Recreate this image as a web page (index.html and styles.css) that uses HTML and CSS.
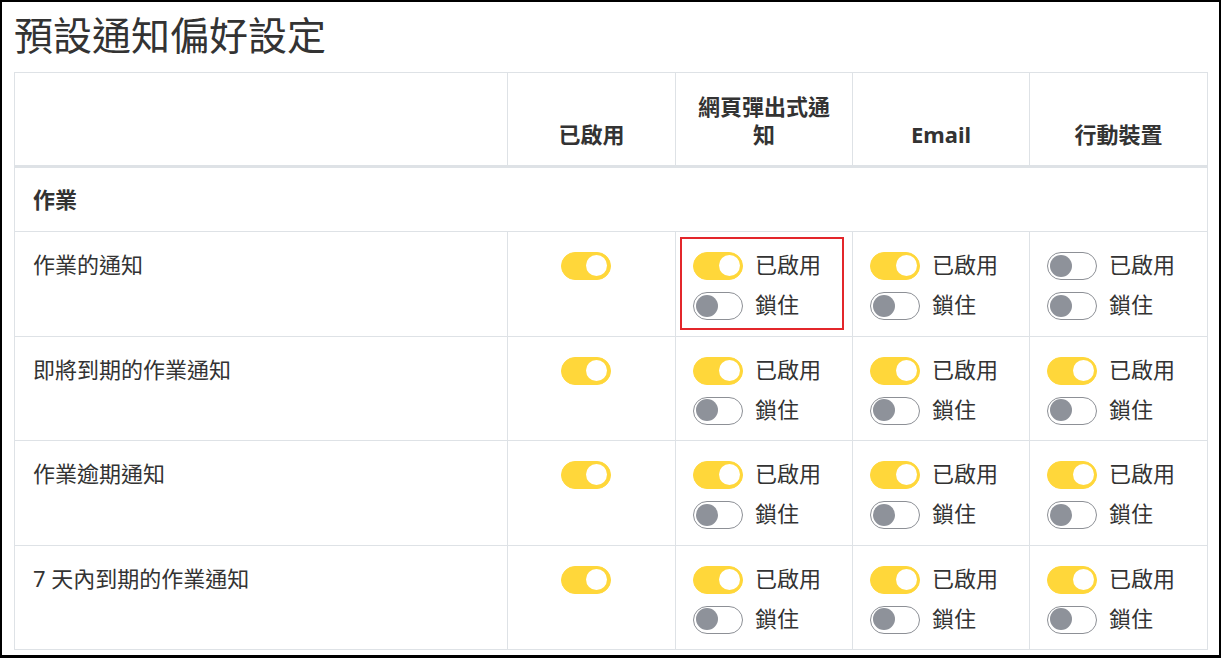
FILE: index.html
```html
<!DOCTYPE html>
<html lang="zh-Hant">
<head>
<meta charset="utf-8">
<title>預設通知偏好設定</title>
<link rel="stylesheet" href="styles.css">
</head>
<body>
<div class="frame">
  <h1 class="title">預設通知偏好設定</h1>
  <table class="prefs">
    <colgroup>
      <col class="c-name"><col class="c-enabled"><col class="c-ch"><col class="c-ch"><col class="c-ch-last">
    </colgroup>
    <thead>
      <tr>
        <th></th>
        <th>已啟用</th>
        <th>網頁彈出式通知</th>
        <th>Email</th>
        <th>行動裝置</th>
      </tr>
    </thead>
    <tbody>
      <tr class="section"><th colspan="5">作業</th></tr>

      <tr>
        <td class="name"><span class="label">作業的通知</span></td>
        <td class="enabled"><span class="switch on"></span><span class="spacer"></span></td>
        <td class="channel"><div class="group highlight">
          <div class="opt"><span class="switch on"></span><span class="label">已啟用</span></div>
          <div class="opt"><span class="switch"></span><span class="label">鎖住</span></div>
        </div></td>
        <td class="channel"><div class="group">
          <div class="opt"><span class="switch on"></span><span class="label">已啟用</span></div>
          <div class="opt"><span class="switch"></span><span class="label">鎖住</span></div>
        </div></td>
        <td class="channel"><div class="group">
          <div class="opt"><span class="switch"></span><span class="label">已啟用</span></div>
          <div class="opt"><span class="switch"></span><span class="label">鎖住</span></div>
        </div></td>
      </tr>

      <tr>
        <td class="name"><span class="label">即將到期的作業通知</span></td>
        <td class="enabled"><span class="switch on"></span><span class="spacer"></span></td>
        <td class="channel"><div class="group">
          <div class="opt"><span class="switch on"></span><span class="label">已啟用</span></div>
          <div class="opt"><span class="switch"></span><span class="label">鎖住</span></div>
        </div></td>
        <td class="channel"><div class="group">
          <div class="opt"><span class="switch on"></span><span class="label">已啟用</span></div>
          <div class="opt"><span class="switch"></span><span class="label">鎖住</span></div>
        </div></td>
        <td class="channel"><div class="group">
          <div class="opt"><span class="switch on"></span><span class="label">已啟用</span></div>
          <div class="opt"><span class="switch"></span><span class="label">鎖住</span></div>
        </div></td>
      </tr>

      <tr>
        <td class="name"><span class="label">作業逾期通知</span></td>
        <td class="enabled"><span class="switch on"></span><span class="spacer"></span></td>
        <td class="channel"><div class="group">
          <div class="opt"><span class="switch on"></span><span class="label">已啟用</span></div>
          <div class="opt"><span class="switch"></span><span class="label">鎖住</span></div>
        </div></td>
        <td class="channel"><div class="group">
          <div class="opt"><span class="switch on"></span><span class="label">已啟用</span></div>
          <div class="opt"><span class="switch"></span><span class="label">鎖住</span></div>
        </div></td>
        <td class="channel"><div class="group">
          <div class="opt"><span class="switch on"></span><span class="label">已啟用</span></div>
          <div class="opt"><span class="switch"></span><span class="label">鎖住</span></div>
        </div></td>
      </tr>

      <tr>
        <td class="name"><span class="label">7 天內到期的作業通知</span></td>
        <td class="enabled"><span class="switch on"></span><span class="spacer"></span></td>
        <td class="channel"><div class="group">
          <div class="opt"><span class="switch on"></span><span class="label">已啟用</span></div>
          <div class="opt"><span class="switch"></span><span class="label">鎖住</span></div>
        </div></td>
        <td class="channel"><div class="group">
          <div class="opt"><span class="switch on"></span><span class="label">已啟用</span></div>
          <div class="opt"><span class="switch"></span><span class="label">鎖住</span></div>
        </div></td>
        <td class="channel"><div class="group">
          <div class="opt"><span class="switch on"></span><span class="label">已啟用</span></div>
          <div class="opt"><span class="switch"></span><span class="label">鎖住</span></div>
        </div></td>
      </tr>
    </tbody>
  </table>
</div>
</body>
</html>
```

FILE: styles.css
```css
* { box-sizing: border-box; }

html, body {
  margin: 0;
  padding: 0;
  background: #fff;
}

body {
  font-family: "Noto Sans", "Noto Sans CJK TC", sans-serif;
  color: #333;
}

.frame {
  width: 1221px;
  height: 658px;
  border: 2px solid #000;
  border-bottom-width: 3px;
  padding: 0 12px;
  overflow: hidden;
}

.title {
  margin: 8px 0 0;
  height: 62px;
  font-size: 39px;
  font-weight: 400;
  line-height: 50px;
  color: #333;
}

.prefs {
  width: 1193px;
  table-layout: fixed;
  border-collapse: collapse;
  font-size: 22px;
  line-height: 28px;
}

.c-name { width: 493px; }
.c-enabled { width: 168px; }
.c-ch { width: 177px; }
.c-ch-last { width: 178px; }

.prefs th,
.prefs td {
  border: 1px solid #dee2e6;
}

.prefs thead th {
  vertical-align: bottom;
  text-align: center;
  font-weight: 700;
  padding: 19px 17px 17px;
  border-bottom: 3px solid #dee2e6;
}

.prefs .section th {
  text-align: left;
  font-weight: 700;
  padding: 17px 18px 18px;
}

.prefs td {
  vertical-align: top;
  padding: 14px 17px 9.5px;
}

.prefs td.name {
  padding-left: 18px;
  line-height: 40px;
}

.label {
  position: relative;
  top: -2px;
}

.prefs td.enabled {
  text-align: center;
  padding-top: 20px;
}

.spacer {
  display: inline-block;
  width: 12px;
}

.group {
  position: relative;
}

.group.highlight::after {
  content: "";
  position: absolute;
  top: -9px;
  left: -13px;
  right: -9px;
  bottom: -4px;
  border: 2px solid #e3262b;
  pointer-events: none;
}

.opt {
  display: flex;
  align-items: center;
  gap: 12px;
  height: 40px;
  white-space: nowrap;
}

.switch {
  position: relative;
  display: inline-block;
  vertical-align: top;
  width: 50px;
  height: 28px;
  border-radius: 14px;
  border: 1.5px solid #8d9096;
  background: #fff;
  flex: none;
}

.switch::after {
  content: "";
  position: absolute;
  top: 1.5px;
  left: 2px;
  width: 22px;
  height: 22px;
  border-radius: 50%;
  background: #8e929a;
}

.switch.on {
  background: #ffd73a;
  border-color: #ffd73a;
}

.switch.on::after {
  left: auto;
  right: 2.5px;
  top: 2px;
  width: 21px;
  height: 21px;
  background: #fff;
}
```
